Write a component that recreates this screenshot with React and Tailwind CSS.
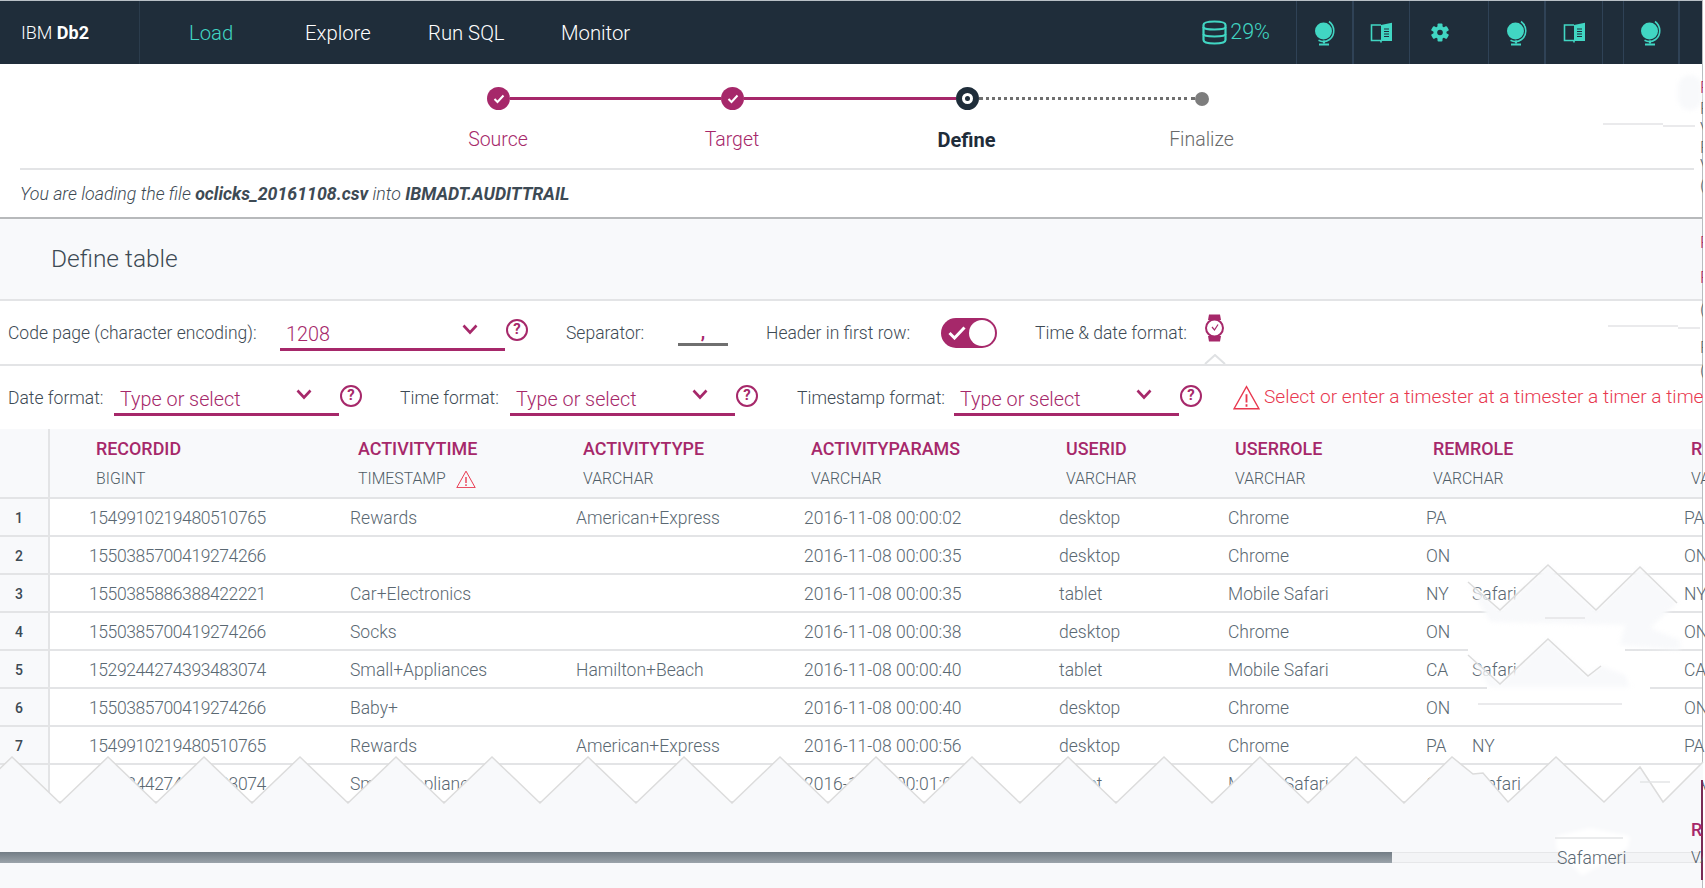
import React from 'react';

const rows = [
  ['1549910219480510765', 'Rewards', 'American+Express', '2016-11-08 00:00:02', 'desktop', 'Chrome', 'PA', '', 'PA'],
  ['1550385700419274266', '', '', '2016-11-08 00:00:35', 'desktop', 'Chrome', 'ON', '', 'ON'],
  ['1550385886388422221', 'Car+Electronics', '', '2016-11-08 00:00:35', 'tablet', 'Mobile Safari', 'NY', 'Safari', 'NY'],
  ['1550385700419274266', 'Socks', '', '2016-11-08 00:00:38', 'desktop', 'Chrome', 'ON', '', 'ON'],
  ['1529244274393483074', 'Small+Appliances', 'Hamilton+Beach', '2016-11-08 00:00:40', 'tablet', 'Mobile Safari', 'CA', 'Safari', 'CA'],
  ['1550385700419274266', 'Baby+', '', '2016-11-08 00:00:40', 'desktop', 'Chrome', 'ON', '', 'ON'],
  ['1549910219480510765', 'Rewards', 'American+Express', '2016-11-08 00:00:56', 'desktop', 'Chrome', 'PA', 'NY', 'PA'],
  ['1529244274393483074', 'Small+Appliances', '', '2016-11-08 00:01:02', 'tablet', 'Mobile Safari', 'CA', ' Safari', 'CA'],
];

const columns = [
  ['RECORDID', 'BIGINT'],
  ['ACTIVITYTIME', 'TIMESTAMP'],
  ['ACTIVITYTYPE', 'VARCHAR'],
  ['ACTIVITYPARAMS', 'VARCHAR'],
  ['USERID', 'VARCHAR'],
  ['USERROLE', 'VARCHAR'],
  ['REMROLE', 'VARCHAR'],
  ['R', 'VARCHAR'],
];

// bits of the next panel that show at the right edge
const scraps = [
  ['R', 'top-[97px] text-[#5a6872]'],
  ['V', 'top-[117px] text-[#5a6872]'],
  ['R', 'top-[136px] text-[#5a6872]'],
  ['V', 'top-[154px] text-[#5a6872]'],
  ['(', 'top-[174px] text-[#5a6872]'],
  ['R', 'top-[76px] text-[#a6286a]'],
  ['R', 'top-[231px] text-[#a6286a]'],
  ['R', 'top-[266px] text-[#a6286a]'],
  ['(', 'top-[298px] text-[#5a6872]'],
  ['R', 'top-[336px] text-[#5a6872]'],
  ['(', 'top-[359px] text-[#5a6872]'],
];

// the torn paper edge at the bottom of the table
const zigzagPoints = () => {
  const pts = [[-36, 803]];
  for (let k = 0; k <= 15; k++) {
    pts.push([12 + 96 * k, 757]);
    if (k < 15) pts.push([60 + 96 * k, 803]);
  }
  return pts.concat([[1473, 774], [1483, 773], [1508, 802], [1556, 757], [1604, 802], [1640, 767], [1663, 802], [1703, 762]]);
};
const toPath = (pts) => pts.map((p, i) => `${i ? 'L' : 'M'}${p[0]} ${p[1]}`).join(' ');

const Globe = () => (
  <svg width="22" height="26" viewBox="0 0 22 26" fill="none">
    <circle cx="9.500" cy="11" r="8.500" fill="#41d6c3" />
    <path d="M15 1.500c6 4.500 6.500 13.500 .5 18-3 2.200-7.500 2.700-11 .8" stroke="#41d6c3" strokeWidth="1.600" />
    <rect x="9" y="20.500" width="2" height="3" fill="#41d6c3" />
    <rect x="5" y="23.500" width="10" height="2" fill="#41d6c3" />
  </svg>
);

const Book = () => (
  <svg width="23" height="22" viewBox="0 0 22 22" fill="none">
    <path d="M10.500 3 H1 V18.500 H10.500 L10.500 20.500" stroke="#41d6c3" strokeWidth="1.600" />
    <path d="M10.500 3 L21.500 .8 V19 H10.500 Z" fill="#41d6c3" />
    <path d="M13.500 7h5M13.500 9.500h5M13.500 12h5M13.500 14.500h5" stroke="#1f2d3a" strokeWidth="1" />
  </svg>
);

const Gear = () => (
  <svg width="18" height="19" viewBox="0 0 18 19">
    <g fill="#41d6c3">
      <rect x="6.500" y=".5" width="5" height="18" rx="1" />
      <rect x="6.500" y=".5" width="5" height="18" rx="1" transform="rotate(60 9 9.500)" />
      <rect x="6.500" y=".5" width="5" height="18" rx="1" transform="rotate(120 9 9.500)" />
      <circle cx="9" cy="9.500" r="6.500" />
    </g>
    <circle cx="9" cy="9.500" r="2.800" fill="#1f2d3a" />
  </svg>
);

const Database = () => (
  <svg width="25" height="25" viewBox="0 0 25 25" fill="none" stroke="#41d6c3" strokeWidth="2.200">
    <path d="M1.500 5 C1.500 2 6 1.500 12.500 1.500 S23.500 2 23.500 5 V7 C23.500 9 19 9.500 12.500 9.500 S1.500 9 1.500 7 Z" />
    <path d="M1.500 7 V14 C1.500 16 6 16.500 12.500 16.500 S23.500 16 23.500 14 V7" />
    <path d="M1.500 14 V20 C1.500 22.500 6 23.500 12.500 23.500 S23.500 22.500 23.500 20 V14" />
  </svg>
);

const Chevron = () => (
  <svg width="16" height="11" viewBox="0 0 16 11" fill="none" stroke="#a6286a" strokeWidth="2.600">
    <path d="M1.500 1.500 L8 8.500 L14.500 1.500" />
  </svg>
);

const Warning = ({ size }) => (
  <svg width={size} height={size * 0.92} viewBox="0 0 26 24" fill="none" stroke="#e8384f" strokeWidth="1.300">
    <path d="M13 1.500 L25 23 H1 Z" />
    <path d="M13 9 V17 M13 18.500 V21" strokeWidth="1.800" />
  </svg>
);

const Help = ({ className }) => (
  <div className={`w-[22px] h-[22px] rounded-full border-2 border-[#a6286a] text-[#a6286a] text-[15px] font-bold flex items-center justify-center shrink-0 ${className}`}>
    ?
  </div>
);

const Select = ({ value }) => (
  <div className="w-[225px] h-[36px] border-b-[3px] border-[#a6286a] pl-[6px] flex justify-between items-center shrink-0">
    <span className="text-[19.8px] font-light text-[#a6286a] leading-none mt-[8px]">{value}</span>
    <span className="mr-[27px] mb-[3px]"><Chevron /></span>
  </div>
);

const Label = ({ className, children }) => (
  <span className={`text-[17.5px] font-light text-[#3d4a54] whitespace-nowrap shrink-0 pt-px ${className}`}>{children}</span>
);

const Check = () => (
  <svg width="12" height="10" viewBox="0 0 12 10" fill="none" stroke="white" strokeWidth="2">
    <path d="M1.500 5 L4.500 8 L10.500 1.500" />
  </svg>
);

const Step = ({ kind }) => {
  if (kind === 'done') {
    return (
      <div className="w-[23px] h-[23px] rounded-full bg-[#a6286a] flex items-center justify-center shrink-0">
        <Check />
      </div>
    );
  }
  if (kind === 'current') {
    return (
      <div className="w-[23px] h-[23px] rounded-full border-[6px] border-[#1f2d3a] bg-white flex items-center justify-center shrink-0">
        <div className="w-[5px] h-[5px] rounded-full bg-[#1f2d3a]" />
      </div>
    );
  }
  return <div className="w-[14px] h-[14px] rounded-full bg-[#7d7d7d] shrink-0" />;
};

const App = () => {
  const zig = zigzagPoints();
  return (
    <div className="relative w-[1705px] h-[888px] overflow-hidden bg-white" style={{ fontFamily: 'Roboto, "Liberation Sans", sans-serif' }}>
      <div className="w-[1703px] border-r border-[#b9bcc0]">
        {/* top bar */}
        <div className="h-[64px] border-t border-[#b9c0c6] bg-[#1f2d3a] flex items-stretch">
          <div className="w-[140px] border-r border-[#2b3c4c] pl-[21px] flex items-center text-white text-[18px] font-light">
            IBM&nbsp;<b className="font-bold">Db2</b>
          </div>
          <div className="flex items-center pt-[2px] text-[20.3px] font-light text-white">
            <span className="ml-[49px] w-[116px] text-[#41d6c3]">Load</span>
            <span className="w-[123px]">Explore</span>
            <span className="w-[133px]">Run SQL</span>
            <span>Monitor</span>
          </div>
          <div className="ml-auto flex items-stretch">
            <div className="flex items-center gap-[3px] text-[21.500px] font-light text-[#41d6c3] mr-[26px]">
              <Database />
              <span>29%</span>
            </div>
            <div className="w-[56px] border-l border-[#2f4256] flex items-center justify-center"><Globe /></div>
            <div className="w-[57px] border-l-2 border-[#2f4256] flex items-center justify-center"><Book /></div>
            <div className="w-[79px] border-l border-[#2f4256] flex items-center justify-center"><span className="mr-[18px]"><Gear /></span></div>
            <div className="w-[56px] border-l border-[#2f4256] flex items-center justify-center"><Globe /></div>
            <div className="w-[58px] border-l-2 border-[#2f4256] flex items-center justify-center"><Book /></div>
            <div className="w-[21px] border-l border-[#2f4256]" />
            <div className="w-[55px] border-l border-[#2f4256] flex items-center justify-center"><Globe /></div>
            <div className="w-[24px] border-l-2 border-[#2f4256]" />
          </div>
        </div>

        {/* steps */}
        <div className="h-[104px] pt-[23px]">
          <div className="flex items-center ml-[487px]">
            <Step kind="done" />
            <div className="w-[211px] h-[3px] bg-[#a6286a]" />
            <Step kind="done" />
            <div className="w-[212px] h-[3px] bg-[#a6286a]" />
            <Step kind="current" />
            <div className="w-[216px] border-t-[3px] border-dotted border-[#6f6f6f]" />
            <Step kind="next" />
          </div>
          <div className="grid grid-cols-[234px_234px_235px_235px] ml-[381px] mt-[15px] text-[19.5px] font-light text-center">
            <span className="text-[#a6286a]">Source</span>
            <span className="text-[#a6286a]">Target</span>
            <span className="font-bold text-[20px] text-[#1f2d3a]">Define</span>
            <span className="text-[#6a6a6a]">Finalize</span>
          </div>
        </div>

        <div className="mx-[20px] mr-[8px] border-t-2 border-[#e3e4e6]" />
        <div className="h-[47px] pl-[20px] pt-[2px] flex items-center text-[17.75px] italic font-light text-[#3d4a54]">
          <span>You are loading the file&nbsp;<b className="font-bold">oclicks_20161108.csv</b>&nbsp;into&nbsp;<b className="font-bold">IBMADT.AUDITTRAIL</b></span>
        </div>

        {/* define table */}
        <div className="h-[84px] border-t-2 border-[#b7b9bb] border-b-2 border-b-[#e3e4e6] bg-[#f8f9fb] pl-[51px] flex items-center">
          <span className="text-[24.500px] font-light text-[#3d4a54]">Define table</span>
        </div>

        <div className="h-[65px] border-b-2 border-[#e3e4e6] flex items-center pl-[8px]">
          <Label className="w-[272px]">Code page (character encoding):</Label>
          <Select value="1208" />
          <Help className="ml-px mb-[6px]" />
          <Label className="ml-[38px] w-[112px]">Separator:</Label>
          <div className="w-[50px] h-[27px] border-b-[3px] border-[#6f6f6f] text-center text-[18px] pt-[3px] leading-[20px] text-[#a6286a] font-bold shrink-0">,</div>
          <Label className="ml-[38px] w-[175px]">Header in first row:</Label>
          <div className="w-[56px] h-[30px] rounded-full bg-[#a6286a] flex items-center justify-between pl-[7px] pr-[2px] shrink-0">
            <svg width="18" height="14" viewBox="0 0 18 14" fill="none" stroke="white" strokeWidth="3"><path d="M1.500 7 L6.500 12 L16.500 1.500" /></svg>
            <div className="w-[26px] h-[26px] rounded-full bg-white" />
          </div>
          <Label className="ml-[38px] w-[170px]">Time &amp; date format:</Label>
          <div className="relative mb-[10px]">
            <svg width="20" height="28" viewBox="0 0 20 28" fill="none">
              <path d="M4 0.500 H15 L16 6 H3 Z M3 22 H16 L15 27.500 H4 Z" fill="#a6286a" />
              <circle cx="9.500" cy="14" r="8.500" stroke="#a6286a" strokeWidth="2" fill="white" />
              <path d="M7 13 L9.500 16 L13 10.500" stroke="#a6286a" strokeWidth="1.200" />
            </svg>
            <svg className="absolute left-[-1px] top-[40px]" width="22" height="10" viewBox="0 0 22 10" fill="none" stroke="#dfe1e3" strokeWidth="2">
              <path d="M1 10 L11 1 L21 10" />
            </svg>
          </div>
        </div>

        <div className="h-[63px] flex items-center pl-[8px]">
          <Label className="w-[106px]">Date format:</Label>
          <Select value="Type or select" />
          <Help className="ml-px mb-1" />
          <Label className="ml-[38px] w-[110px]">Time format:</Label>
          <Select value="Type or select" />
          <Help className="ml-px mb-1" />
          <Label className="ml-[39px] w-[157px]">Timestamp format:</Label>
          <Select value="Type or select" />
          <Help className="ml-px mb-1" />
          <span className="ml-[31px] shrink-0"><Warning size={27} /></span>
          <span className="ml-[4px] text-[19.1px] font-light text-[#e8384f] whitespace-nowrap">Select or enter a timester at a timester a timer a time</span>
        </div>

        {/* table */}
        <div className="h-[70px] bg-[#f8f9fb] border-b-2 border-[#e3e4e6] flex">
          <div className="w-[50px] border-r-2 border-[#e3e4e6] shrink-0" />
          <div className="grid grid-cols-[262px_225px_228px_255px_169px_198px_258px_100px] pl-[46px]">
            {columns.map(([name, type], i) => (
              <div key={name} className="flex flex-col pt-[7px]">
                <span className="text-[17.9px] font-medium text-[#a6286a] leading-[26px]">{name}</span>
                <span className="text-[15.8px] font-light text-[#4f5c66] mt-[6px] flex items-center gap-[10px] leading-[22px]">
                  {type}
                  {i === 1 && <Warning size={20} />}
                </span>
              </div>
            ))}
          </div>
        </div>
        {rows.map((row, r) => (
          <div key={r} className="h-[38px] border-b-2 border-[#e3e4e6] flex">
            <div className="w-[50px] bg-[#f8f9fb] border-r-2 border-[#e3e4e6] pl-[15px] pt-[3px] text-[14px] font-medium text-[#3d4a54] flex items-center shrink-0">{r + 1}</div>
            <div className="grid grid-cols-[262px_226px_228px_255px_169px_198px_46px_212px_46px] pl-[38px] pt-[3px] items-center text-[17.5px] font-light text-[#5a6872] whitespace-pre">
              {row.map((cell, c) => <span key={c} className={c === 0 ? 'ml-px tracking-[-0.4px]' : ''}>{cell}</span>)}
            </div>
          </div>
        ))}
        <div className="h-[49px] bg-[#f8f9fb]" />

        {/* horizontal scroll */}
        <div className="h-[11px] bg-[#f3f4f6] border-y border-[#e6e7e9]">
          <div className="w-[1392px] h-[11px] -mt-px bg-gradient-to-b from-[#737d85] to-[#9ba3aa]" />
        </div>
        <div className="h-[28px] bg-[#f8f9fb]" />
      </div>

      {/* torn edges over the table */}
      <svg className="absolute top-0 left-0 pointer-events-none" width="1705" height="888" viewBox="0 0 1705 888" fill="none">
        <path d={`${toPath(zig)} L1703 851 L0 851 L-36 851 Z`} fill="#f8f9fb" />
        <path d={toPath(zig)} stroke="#dcdcdc" strokeWidth="1.500" />
        <path d="M1640 782 H1670" stroke="#e3e4e6" strokeWidth="1.500" />

        <path className="blur-[2px]" d="M1468 582 L1500 610 L1548 565 L1596 610 L1640 567 L1677 603 L1650 628 L1680 640 L1680 650 L1620 645 L1625 625 L1490 622 Z" fill="#f8f9fb" />
        <path d="M1468 582 L1500 610 L1548 565 L1596 610 L1640 567 L1677 603" stroke="#dcdcdc" strokeWidth="1.500" />
        <path d="M1468 647 H1625 V653 H1468 Z M1487 686 H1650 V691 H1487 Z" fill="white" />
        <path className="blur-[2px]" d="M1468 655 L1500 684 L1548 639 L1588 676 L1601 666 L1625 675 L1630 687 L1490 687 Z" fill="#f8f9fb" />
        <path d="M1468 655 L1500 684 L1548 639 L1588 676 L1601 666" stroke="#dcdcdc" strokeWidth="1.500" />
        <path d="M1545 618 H1585 M1478 704 H1622" stroke="#e3e4e6" strokeWidth="1.500" />

        {/* scraps near the right edge */}
        <path d="M1603 124 H1663 M1663 126 H1695 M1608 326 H1678 M1678 328 H1700" stroke="#e3e4e6" strokeWidth="1.500" />
        <path className="blur-[2px]" d="M1556 848 L1582 876 L1628 848 L1630 836 L1590 828 L1556 836 Z" fill="white" />
        <path d="M1555 838 H1623" stroke="#e3e4e6" strokeWidth="1.500" />
        <path d="M1702 780 V880" stroke="#7a2a55" strokeWidth="2" />
      </svg>

      <div className="absolute left-[1678px] top-[75px] w-[24px] h-[35px] rounded-full bg-[#f8f9fb] blur-[2px]" />
      {scraps.map(([ch, cls], i) => (
        <span key={i} className={`absolute left-[1700px] w-[3px] overflow-hidden text-[17px] font-light leading-[22px] ${cls}`}>{ch}</span>
      ))}

      <span className="absolute left-[1557px] top-[847px] text-[17.5px] font-light text-[#5a6872] leading-[22px]">Safameri</span>
      <span className="absolute left-[1691px] top-[819px] text-[17.9px] font-medium text-[#a6286a] leading-[22px]">R</span>
      <span className="absolute left-[1691px] top-[847px] text-[15.8px] font-light text-[#4f5c66] leading-[22px] w-[12px] overflow-hidden">VA</span>
    </div>
  );
};

export default App;
